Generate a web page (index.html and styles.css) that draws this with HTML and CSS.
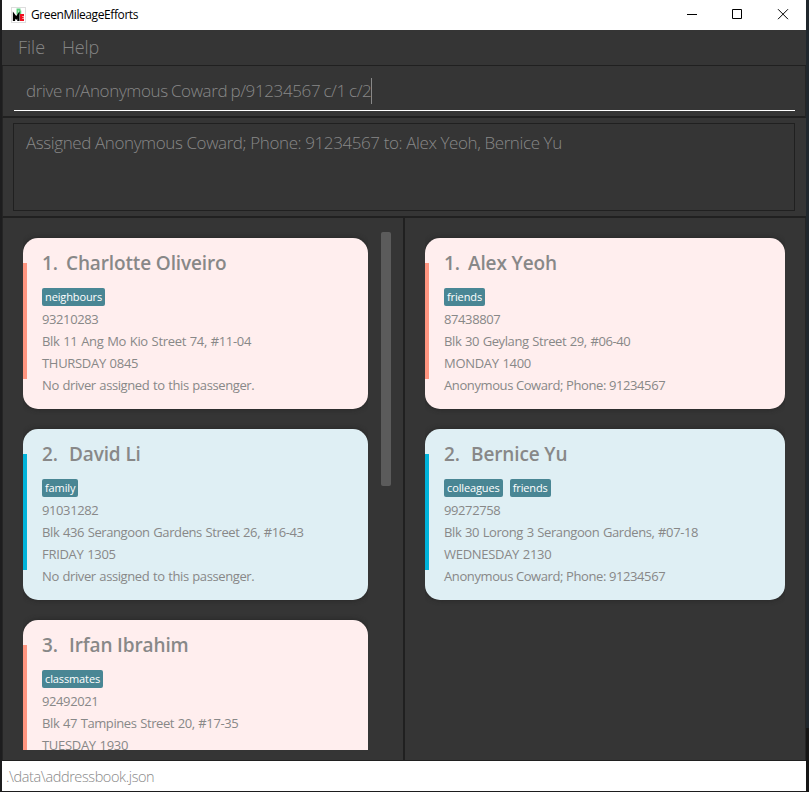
FILE: index.html
```html
<!DOCTYPE html>
<html lang="en">
<head>
<meta charset="utf-8">
<title>GreenMileageEfforts</title>
<link rel="stylesheet" href="styles.css">
</head>
<body>
<div class="window">
  <header class="titlebar">
    <svg class="logo" width="15" height="16" viewBox="0 0 15 16">
      <rect x=".5" y=".5" width="14" height="15" fill="#fff" stroke="#ddd"/>
      <path d="M9.500 2.500H6.500V6.500H9.300V4.500H8" fill="none" stroke="#5fd080" stroke-width="1.900"/>
      <path d="M3 14V8L5.200 11 7.400 8V14" fill="none" stroke="#000" stroke-width="2.300"/>
      <path d="M13 8H10V13H13M10 10.500H12.700" fill="none" stroke="#f01020" stroke-width="2"/>
    </svg>
    <span class="app-name">GreenMileageEfforts</span>
    <svg class="controls" width="104" height="12" viewBox="0 0 104 12" fill="none" stroke="#000">
      <path d="M0 6.500H10M45.500 1.500H54.500V10.500H45.500ZM91 1.200L101 11.200M101 1.200L91 11.200"/>
    </svg>
  </header>
  <nav class="menu"><span class="file">File</span><span class="help">Help</span></nav>
  <section class="command"><div class="field"><span class="command-text">drive n/Anonymous Coward p/91234567 c/1 c/2</span><i class="caret"></i></div></section>
  <section class="result"><div class="result-box"><span class="result-text">Assigned Anonymous Coward; Phone: 91234567 to: Alex Yeoh, Bernice Yu</span></div></section>
  <main class="lists">
    <section class="pane passengers">
      <div class="cards">
        <article class="card pink"><h2><span class="index narrow">1.</span>Charlotte Oliveiro</h2><div class="tags"><span>neighbours</span></div><p>93210283</p><p class="ones">Blk 11 Ang Mo Kio Street 74, #11-04</p><p class="day">THURSDAY 0845</p><p>No driver assigned to this passenger.</p></article>
        <article class="card blue"><h2><span class="index">2.</span>David Li</h2><div class="tags"><span>family</span></div><p>91031282</p><p>Blk 436 Serangoon Gardens Street 26, #16-43</p><p class="day">FRIDAY 1305</p><p>No driver assigned to this passenger.</p></article>
        <article class="card pink"><h2><span class="index">3.</span>Irfan Ibrahim</h2><div class="tags"><span>classmates</span></div><p>92492021</p><p>Blk 47 Tampines Street 20, #17-35</p><p class="day">TUESDAY 1930</p></article>
      </div>
      <div class="scrollbar"></div>
    </section>
    <section class="pane assigned">
      <div class="cards">
        <article class="card pink"><h2><span class="index narrow">1.</span>Alex Yeoh</h2><div class="tags"><span>friends</span></div><p>87438807</p><p>Blk 30 Geylang Street 29, #06-40</p><p class="day">MONDAY 1400</p><p class="driver">Anonymous Coward; Phone: 91234567</p></article>
        <article class="card blue"><h2><span class="index">2.</span>Bernice Yu</h2><div class="tags"><span>colleagues</span><span>friends</span></div><p>99272758</p><p>Blk 30 Lorong 3 Serangoon Gardens, #07-18</p><p class="day">WEDNESDAY 2130</p><p class="driver">Anonymous Coward; Phone: 91234567</p></article>
      </div>
    </section>
  </main>
  <footer class="status"><span class="path">.\data\addressbook.json</span></footer>
</div>
</body>
</html>
```
FILE: styles.css
```css
* { box-sizing: border-box; }
body { margin: 0; width: 809px; height: 792px; overflow: hidden; background: linear-gradient(#20272d 728px, #151515 728px) right / 3px 100% no-repeat #1d1d1e; font-family: "Open Sans", "Noto Sans", sans-serif; color: #888; }
.window { width: 804px; height: 791px; margin-left: 2px; display: flex; flex-direction: column; background: #353535; white-space: nowrap; }
.titlebar { flex: none; height: 30px; background: #fff; display: flex; align-items: center; padding: 0 15px 2px 9px; color: #000; font-size: 12px; }
.logo { margin-top: 1px; }
.app-name { margin-left: 5px; letter-spacing: -.41px; line-height: 18px; padding-top: 2px; }
.controls { margin-left: auto; }
.menu { flex: none; height: 36px; border-bottom: 1px solid #202020; display: flex; gap: 17px; padding-left: 16px; line-height: 35px; font-size: 18px; font-weight: 300; color: #858585; }
.help { letter-spacing: -.2px; }
.command { flex: none; height: 52px; padding: 8px 11px 6px 11px; border-bottom: 2px solid #202020; border-left: 1px solid #252525; border-right: 1px solid #252525; }
.field { height: 37px; border-bottom: 1px solid #fff; display: flex; align-items: center; padding: 0 0 3px 12px; margin-right: -1px; font-size: 17px; font-weight: 300; }
.command-text { letter-spacing: -.37px; word-spacing: -.9px; }
.caret { width: 1px; height: 26px; background: #888; }
.result { flex: none; height: 100px; padding: 5px 11px 5px 10px; border-bottom: 2px solid #202020; border-left: 1px solid #252525; }
.result-box { height: 88px; border: 1px solid #202020; padding: 7px 12px; font-size: 17px; line-height: 24px; font-weight: 300; }
.result-text { letter-spacing: -.4px; }
.lists { flex: none; height: 543px; border-bottom: 1px solid #202020; border-left: 1px solid #252525; display: flex; }
.pane { display: flex; align-items: flex-start; padding-left: 20px; }
.passengers { width: 402px; border-right: 2px solid #202020; }
.assigned { flex: 1; border-right: 1px solid #252525; }
.cards { height: 532px; padding-top: 20px; overflow: hidden; display: flex; flex-direction: column; gap: 20px; width: 345px; }
.assigned .cards { width: 360px; }
.scrollbar { width: 10px; height: 254px; margin: 14px 0 0 13px; border-radius: 2px; background: #5b5b5b; }
.card { flex: none; height: 171px; border-radius: 15px; padding: 10px 0 0 19px; overflow: hidden; box-shadow: 0 0 5px #242424; background-repeat: no-repeat; background-position: 0 25px; background-size: 4px 116px; }
.pink { background-color: #ffeeee; background-image: linear-gradient(#ff9580, #ff9580); }
.blue { background-color: #dfeff4; background-image: linear-gradient(#00b3da, #00b3da); }
h2 { display: flex; margin: 0; height: 30px; line-height: 30px; font-size: 19px; font-weight: 600; letter-spacing: -.13px; }
.index { width: 27px; }
.narrow { width: 24px; }
.tags { display: flex; gap: 7px; height: 19px; margin: 10px 0 1px; }
.tags span { height: 18px; line-height: 17px; padding: 0 3px; border-radius: 2px; background: #498694; color: #fff; font-size: 11px; letter-spacing: -.12px; }
p { margin: 0; height: 22px; line-height: 22px; font-size: 13px; letter-spacing: -.4px; word-spacing: .65px; }
.ones { letter-spacing: -.32px; }
.day { letter-spacing: -.3px; }
.driver { word-spacing: 0; }
.status { flex: none; height: 30px; background: #fff; padding-left: 4px; line-height: 31px; font-size: 14.5px; font-weight: 300; }
.path { letter-spacing: -.4px; }
```
